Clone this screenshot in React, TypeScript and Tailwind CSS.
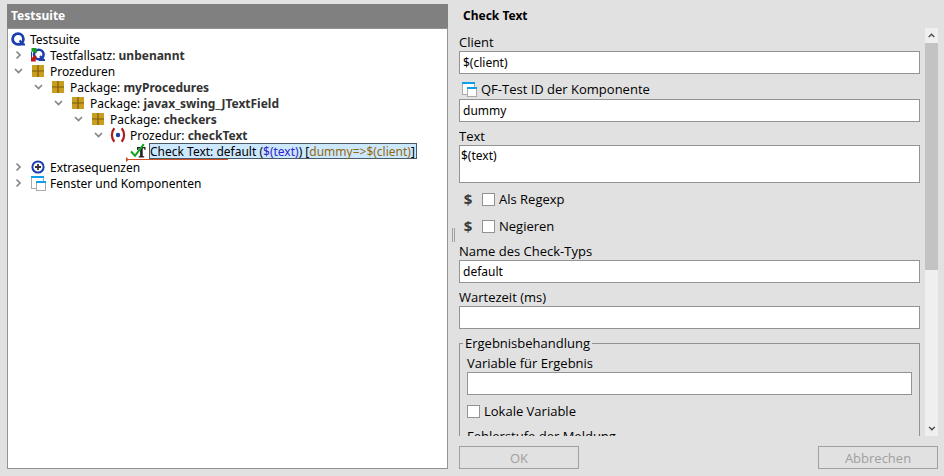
import type { ReactNode } from "react";

function LogoIcon() {
  return (
    <svg viewBox="0 0 16 16" className="h-4 w-4">
      <circle cx="8" cy="8" r="5.400" fill="none" stroke="#1c3fae" strokeWidth="2.800" />
      <path d="M8.500 13.500H15M9.500 9.500l4 4" stroke="#1c3fae" strokeWidth="2.200" fill="none" />
    </svg>
  );
}

function TestSetIcon() {
  return (
    <svg viewBox="0 0 16 16" className="h-4 w-4">
      <circle cx="8.800" cy="7.500" r="4.800" fill="none" stroke="#1c3fae" strokeWidth="2.600" />
      <path d="M9 13h6M10 9l3.500 4" stroke="#1c3fae" strokeWidth="2.200" fill="none" />
      <path d="M1.500 5v6" stroke="#1c3fae" strokeWidth="1" />
      <path d="M1.500 1h5v1.500L6.800 6 5 5.500 3.500 4.500 1.500 5z" fill="#12a01f" />
      <path d="M1 14.500V10l1.500.5L5 8l2 2-1.500 2.500.5 2z" fill="#c01616" />
    </svg>
  );
}

function PackageIcon() {
  return (
    <svg viewBox="0 0 16 16" className="h-4 w-4">
      <rect x="2" y="2" width="12" height="12" fill="#c99d1f" />
      <path d="M8 2v12M2 8h12" stroke="#7d5c0c" strokeWidth="1.200" />
    </svg>
  );
}

function ProcedureIcon() {
  return (
    <svg viewBox="0 0 16 16" className="h-4 w-4">
      <path d="M4.300 1.200c-3.200 4-3.200 9.600 0 13.600M11.700 1.200c3.200 4 3.200 9.600 0 13.600" fill="none" stroke="#b51a1a" strokeWidth="2.200" />
      <circle cx="8" cy="8" r="2.200" fill="#1c3fae" />
    </svg>
  );
}

function CheckTextIcon() {
  return (
    <svg viewBox="0 0 16 16" className="h-4 w-4">
      <path d="M7 4h8.500v3h-.8l-.7-1.800h-1.300v7.800l1.500.6v.9H8.600v-.9l1.500-.6V5.200H8.800L8 7H7z" fill="#222" />
      <path d="M1 8.500l4 4.300L13.800 1.200" fill="none" stroke="#12a31c" strokeWidth="2" />
    </svg>
  );
}

function ExtraIcon() {
  return (
    <svg viewBox="0 0 16 16" className="h-4 w-4">
      <circle cx="8" cy="8" r="5.600" fill="#fff" stroke="#1c3fae" strokeWidth="2" />
      <path d="M8 5v6M5 8h6" stroke="#333" strokeWidth="1.800" />
    </svg>
  );
}

function WindowIcon() {
  return (
    <svg viewBox="0 0 16 16" className="h-4 w-4 shrink-0">
      <rect x="1.500" y="1.500" width="12" height="12" fill="#fff" stroke="#a9a9a9" />
      <rect x="1" y="1" width="13" height="2" fill="#0d9fe8" />
      <rect x="6.500" y="6.500" width="9" height="9" fill="#fff" stroke="#a9a9a9" />
      <rect x="6" y="6" width="10" height="2" fill="#0d9fe8" />
    </svg>
  );
}

function Chevron({ direction, className = "h-4 w-4 text-[#858585]" }: { direction: "right" | "down" | "up"; className?: string }) {
  const d = { right: "M6.500 4.500L10 8l-3.500 3.500", down: "M5 6l3.500 3.500L12 6", up: "M4.500 10L8 6.500l3.500 3.500" }[direction];
  return (
    <svg viewBox="0 0 16 16" className={className}>
      <path d={d} fill="none" stroke="currentColor" strokeWidth="1.700" />
    </svg>
  );
}

type RowProps = { indent?: string; open?: boolean; icon: ReactNode; children: ReactNode };

function Row({ indent = "", open, icon, children }: RowProps) {
  return (
    <li className={`flex h-4 items-center gap-1 whitespace-nowrap ${indent}`}>
      {open !== undefined && (
        <button type="button" aria-label={open ? "Zuklappen" : "Aufklappen"}>
          <Chevron direction={open ? "down" : "right"} />
        </button>
      )}
      {icon}
      <span className="mt-0.5">{children}</span>
    </li>
  );
}

const fieldStyle = "block h-[23px] w-full border border-[#939393] bg-white px-[3px] outline-none";
const boxStyle = "mt-0.5 h-[13px] w-[13px] shrink-0 appearance-none border border-[#939393] bg-white";
const labelStyle = "font-['Open_Sans',sans-serif] text-[13px] leading-4";

function Field({ id, label, value = "", className = "mt-1.5" }: { id: string; label: string; value?: string; className?: string }) {
  return (
    <div className={className}>
      <label htmlFor={id} className={`mb-px block ${labelStyle}`}>{label}</label>
      <input id={id} type="text" defaultValue={value} className={fieldStyle} />
    </div>
  );
}

function DollarCheck({ label }: { label: string }) {
  return (
    <div className="flex h-[17px] items-start">
      <button type="button" aria-label={`Variable: ${label}`} className="w-[18px] text-center font-['Open_Sans',sans-serif] text-[15px] leading-4 font-bold text-[#3c3c3c]">$</button>
      <label className={`ml-[5px] flex items-start gap-1 ${labelStyle}`}>
        <input type="checkbox" className={boxStyle} />
        {label}
      </label>
    </div>
  );
}

export default function App() {
  return (
    <main className="flex h-screen overflow-hidden bg-[#e1e1e1] pr-1.5 pb-[7px] pl-[7px] font-['Noto_Sans',sans-serif] text-[12px] leading-4 text-black">
      <section className="flex min-w-0 flex-[441] flex-col pt-1">
        <h1 className="h-6 shrink-0 bg-[#808080] px-1 leading-6 font-bold text-white">Testsuite</h1>
        <ul className="flex-1 border border-[#939393] bg-white pt-0.5 pl-0.5">
          <Row icon={<LogoIcon />}>Testsuite</Row>
          <Row open={false} icon={<TestSetIcon />}>Testfallsatz: <b className="text-[#333]">unbenannt</b></Row>
          <Row open icon={<PackageIcon />}>Prozeduren</Row>
          <Row indent="pl-5" open icon={<PackageIcon />}>Package: <b className="text-[#333]">myProcedures</b></Row>
          <Row indent="pl-10" open icon={<PackageIcon />}>Package: <b className="text-[#333]">javax_swing_JTextField</b></Row>
          <Row indent="pl-15" open icon={<PackageIcon />}>Package: <b className="text-[#333]">checkers</b></Row>
          <Row indent="pl-20" open icon={<ProcedureIcon />}>Prozedur: <b className="text-[#333]">checkText</b></Row>
          <li className="relative flex h-4 items-center gap-[3px] pl-30 whitespace-nowrap">
            <CheckTextIcon />
            <span className="h-4 border border-[#4a5968] bg-[#cce8ff] pr-px">
              Check Text: default (<span className="text-[#3423c8]">$(text)</span>) [<span className="text-[#94690c]">{"dummy=>$(client)"}</span>]
            </span>
            <svg viewBox="0 0 102 5" className="absolute top-3.5 left-29 h-[5px] w-[102px]">
              <path d="M0 0l3 2.500L0 5zM0 2h102v1H0z" fill="#cf4f24" />
            </svg>
          </li>
          <Row open={false} icon={<ExtraIcon />}>Extrasequenzen</Row>
          <Row open={false} icon={<WindowIcon />}>Fenster und Komponenten</Row>
        </ul>
      </section>

      <div className="flex w-[11px] shrink-0 cursor-col-resize items-center justify-center">
        <div className="h-3.5 w-[3px] border-x border-[#a0a0a0]" />
      </div>

      <section className="flex min-w-0 flex-[479] flex-col">
        <h2 className="h-7 shrink-0 px-1 pt-2 font-bold">Check Text</h2>
        <div className="flex min-h-0 flex-1">
          <form className="min-w-0 flex-1 overflow-hidden">
            <Field id="client" label="Client" value="$(client)" />
            <div className="mt-[7px]">
              <label htmlFor="component" className={`mb-0.5 flex items-center gap-1 pl-0.5 ${labelStyle}`}><WindowIcon />QF-Test ID der Komponente</label>
              <input id="component" type="text" defaultValue="dummy" className={fieldStyle} />
            </div>
            <div className="mt-1.5">
              <label htmlFor="text" className={`mb-px block ${labelStyle}`}>Text</label>
              <textarea id="text" defaultValue="$(text)" className="block h-[38px] w-full resize-none border border-[#939393] bg-white px-px pt-0.5 outline-none" />
            </div>
            <div className="my-2 flex flex-col gap-2.5">
              <DollarCheck label="Als Regexp" />
              <DollarCheck label="Negieren" />
            </div>
            <Field id="check-type" label="Name des Check-Typs" value="default" className="" />
            <Field id="timeout" label="Wartezeit (ms)" />
            <fieldset className="mt-1.5 min-w-0 border border-[#939393] px-[7px]">
              <legend className={`-ml-1 px-0.5 ${labelStyle}`}>Ergebnisbehandlung</legend>
              <Field id="result" label="Variable für Ergebnis" className="mt-1" />
              <label className={`mt-2 flex h-[17px] items-start gap-1 ${labelStyle}`}>
                <input type="checkbox" className={boxStyle} />
                Lokale Variable
              </label>
              <p className={`mt-2 ${labelStyle}`}>Fehlerstufe der Meldung</p>
              <div className="h-8" />
            </fieldset>
          </form>
          <div className="ml-[5px] flex w-[13px] shrink-0 flex-col bg-[#efefef]">
            <button type="button" aria-label="Nach oben" className="h-[15px]"><Chevron direction="up" className="h-[15px] w-[13px] text-[#444]" /></button>
            <div className="flex min-h-0 flex-1 flex-col"><div className="h-3/5 bg-[#c3c3c3]" /></div>
            <button type="button" aria-label="Nach unten" className="h-[15px]"><Chevron direction="down" className="h-[15px] w-[13px] text-[#444]" /></button>
          </div>
        </div>
        <div className={`mt-2.5 flex shrink-0 justify-between ${labelStyle}`}>
          <button type="button" disabled className="h-[23px] w-[120px] border border-[#a0a0a0] text-[#a0a0a0]">OK</button>
          <button type="button" disabled className="h-[23px] w-[120px] border border-[#a0a0a0] text-[#a0a0a0]">Abbrechen</button>
        </div>
      </section>
    </main>
  );
}
